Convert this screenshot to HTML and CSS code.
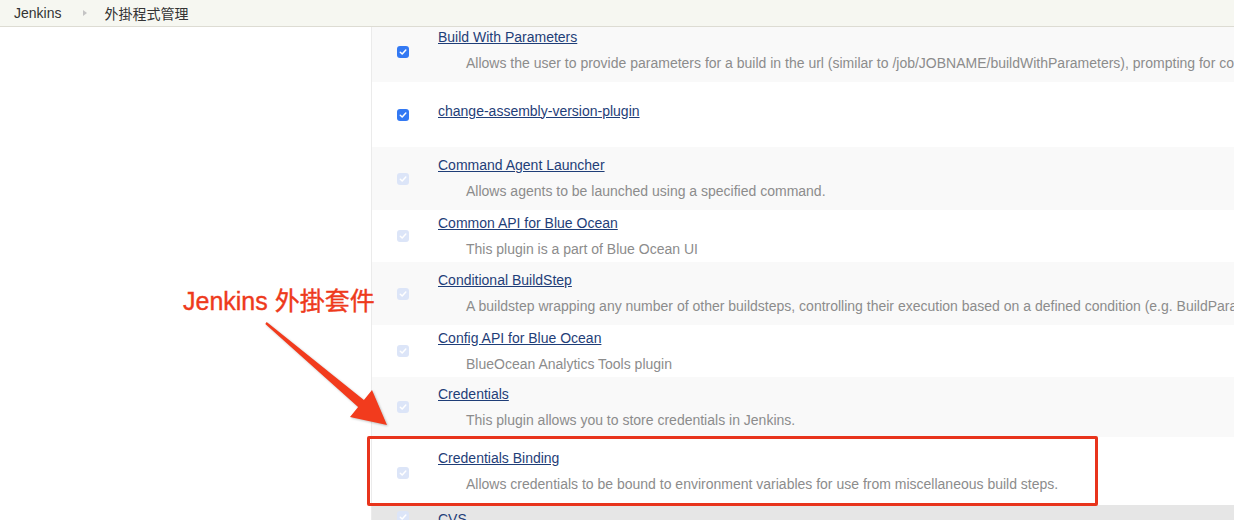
FILE: index.html
```html
<!DOCTYPE html>
<html lang="zh-Hant">
<head>
<meta charset="utf-8">
<title>外掛程式管理 [Jenkins]</title>
<link rel="stylesheet" href="styles.css">
</head>
<body>
<header class="crumbs">
  <a class="crumb">Jenkins</a>
  <span class="sep"></span>
  <a class="crumb">外掛程式管理</a>
</header>
<main class="layout">
  <aside class="side"></aside>
  <section class="plugins">
    <div class="row odd first h55">
      <div class="cb"><svg class="box on" viewBox="0 0 12 12"><rect width="12" height="12" rx="3"/><path d="M3.3 6.2 5.2 8 8.8 4"/></svg></div>
      <div class="info"><a class="name">Build With Parameters</a><div class="desc">Allows the user to provide parameters for a build in the url (similar to /job/JOBNAME/buildWithParameters), prompting for confirmation before triggering the job.</div></div>
    </div>
    <div class="row even nodesc h65">
      <div class="cb"><svg class="box on" viewBox="0 0 12 12"><rect width="12" height="12" rx="3"/><path d="M3.3 6.2 5.2 8 8.8 4"/></svg></div>
      <div class="info"><a class="name">change-assembly-version-plugin</a></div>
    </div>
    <div class="row odd h63">
      <div class="cb"><svg class="box off" viewBox="0 0 12 12"><rect width="12" height="12" rx="3"/><path d="M3.3 6.2 5.2 8 8.8 4"/></svg></div>
      <div class="info"><a class="name">Command Agent Launcher</a><div class="desc">Allows agents to be launched using a specified command.</div></div>
    </div>
    <div class="row even h52">
      <div class="cb"><svg class="box off" viewBox="0 0 12 12"><rect width="12" height="12" rx="3"/><path d="M3.3 6.2 5.2 8 8.8 4"/></svg></div>
      <div class="info"><a class="name">Common API for Blue Ocean</a><div class="desc">This plugin is a part of Blue Ocean UI</div></div>
    </div>
    <div class="row odd h63">
      <div class="cb"><svg class="box off" viewBox="0 0 12 12"><rect width="12" height="12" rx="3"/><path d="M3.3 6.2 5.2 8 8.8 4"/></svg></div>
      <div class="info"><a class="name">Conditional BuildStep</a><div class="desc">A buildstep wrapping any number of other buildsteps, controlling their execution based on a defined condition (e.g. BuildParameters, FileExists ...).</div></div>
    </div>
    <div class="row even h52">
      <div class="cb"><svg class="box off" viewBox="0 0 12 12"><rect width="12" height="12" rx="3"/><path d="M3.3 6.2 5.2 8 8.8 4"/></svg></div>
      <div class="info"><a class="name">Config API for Blue Ocean</a><div class="desc">BlueOcean Analytics Tools plugin</div></div>
    </div>
    <div class="row odd h60">
      <div class="cb"><svg class="box off" viewBox="0 0 12 12"><rect width="12" height="12" rx="3"/><path d="M3.3 6.2 5.2 8 8.8 4"/></svg></div>
      <div class="info"><a class="name">Credentials</a><div class="desc">This plugin allows you to store credentials in Jenkins.</div></div>
    </div>
    <div class="row even h68">
      <div class="cb"><svg class="box off" viewBox="0 0 12 12"><rect width="12" height="12" rx="3"/><path d="M3.3 6.2 5.2 8 8.8 4"/></svg></div>
      <div class="info"><a class="name">Credentials Binding</a><div class="desc">Allows credentials to be bound to environment variables for use from miscellaneous build steps.</div></div>
    </div>
    <div class="row hover last">
      <div class="cb"><svg class="box off" viewBox="0 0 12 12"><rect width="12" height="12" rx="3"/><path d="M3.3 6.2 5.2 8 8.8 4"/></svg></div>
      <div class="info"><a class="name">CVS</a><div class="desc">Integrates Jenkins with CVS version control system.</div></div>
    </div>
  </section>
</main>
<div class="note">Jenkins 外掛套件</div>
<svg class="arrow" viewBox="0 0 1234 520" width="1234" height="520">
  <polygon points="265.3,323.9 358.1,406.9 350,417 387,425 372,390 363.9,400.1 266.7,322.1"/>
</svg>
<div class="mark"></div>
</body>
</html>
```
FILE: styles.css
```css
html, body {
  margin: 0;
  padding: 0;
  height: 520px;
  overflow: hidden;
  background: #fff;
  font-family: "Liberation Sans", Arial, "Noto Sans CJK TC", sans-serif;
  font-size: 14px;
  color: #333;
}

.crumbs {
  display: flex;
  align-items: center;
  height: 26px;
  border-bottom: 1px solid #dddcd3;
  background: #f6f7f1;
  padding-left: 14px;
  font-size: 14px;
}
.crumb {
  color: #333;
}
.sep {
  width: 0;
  height: 0;
  border-left: 4px solid #c4c4c4;
  border-top: 3px solid transparent;
  border-bottom: 3px solid transparent;
  margin: 0 17px 0 22px;
}

.layout {
  display: flex;
}
.side {
  width: 371px;
  flex: none;
  border-right: 1px solid #ebebeb;
  height: 493px;
}
.plugins {
  flex: 1;
  min-width: 0;
}

.row {
  display: flex;
  align-items: center;
}
.odd { background: #f9f9f9; }
.even { background: #fff; }
.hover { background: #e6e6e6; align-items: flex-start; height: 60px; padding-top: 6px; }
.first { padding-bottom: 9px; box-sizing: border-box; }
.nodesc .name { margin-bottom: 7px; }
.h52 { height: 52px; }
.h55 { height: 55px; }
.h60 { height: 60px; }
.h63 { height: 63px; }
.h65 { height: 65px; }
.h68 { height: 68px; }

.cb {
  width: 62px;
  flex: none;
  display: flex;
  justify-content: center;
}
.first .cb { margin-top: 3px; }
.h68 .cb { margin-top: 3px; }
.box {
  width: 12px;
  height: 12px;
  display: block;
}
.box path {
  fill: none;
  stroke: #fff;
  stroke-width: 1.5;
  stroke-linecap: round;
  stroke-linejoin: round;
}
.box.on rect { fill: #3379f3; }
.box.off rect { fill: #dce5f8; }

.info {
  min-width: 0;
  flex: 1;
  padding-left: 4px;
}
.name {
  display: block;
  line-height: 17px;
  color: #1f3e78;
  text-decoration: underline;
  white-space: nowrap;
}
.desc {
  margin-top: 9px;
  padding-left: 28px;
  line-height: 17px;
  color: #8c8c8c;
  white-space: nowrap;
  overflow: hidden;
}

.note {
  position: absolute;
  left: 183px;
  top: 286px;
  font-size: 25px;
  line-height: 30px;
  color: #ee3a1c;
  white-space: nowrap;
  -webkit-text-stroke: 0.4px #ee3a1c;
}
.arrow {
  position: absolute;
  left: 0;
  top: 0;
  pointer-events: none;
  filter: drop-shadow(1px 1px 1px rgba(0, 0, 0, 0.25));
}
.arrow polygon {
  fill: #f23b1d;
}
.mark {
  position: absolute;
  left: 367px;
  top: 436px;
  width: 725px;
  height: 64px;
  border: 3px solid #e8341c;
  border-radius: 2px;
}
```
